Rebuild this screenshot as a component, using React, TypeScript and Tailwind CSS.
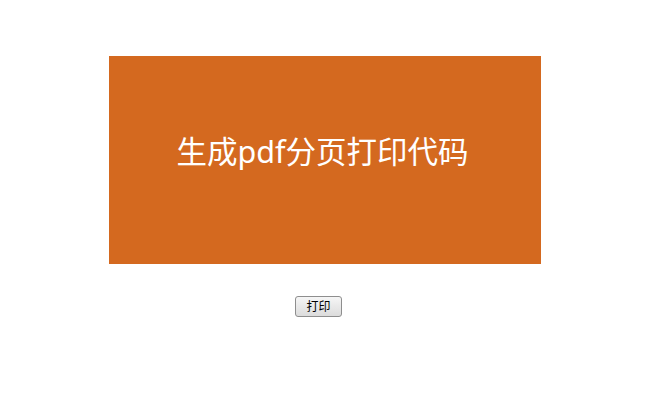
import React from 'react';

const App = () => {
  return (
    <div className="w-[650px] h-[400px] bg-white font-['Noto_Sans','Noto_Sans_CJK_SC',sans-serif]">
      {/* Banner */}
      <div className="pt-[56px] pl-[109px]">
        <div className="w-[432px] h-[208px] bg-[#d4691f] flex items-center justify-center pb-[18px] pr-[5px]">
          <span className="text-white text-[30.5px] leading-none">生成pdf分页打印代码</span>
        </div>
      </div>

      {/* Print button */}
      <div className="pt-[32px] pl-[295px]">
        <button className="w-[47px] h-[21px] flex items-center justify-center rounded-[3px] border border-[#8e8e8e] bg-gradient-to-b from-[#f6f6f6] to-[#dcdcdc] text-[12px] leading-none text-black">
          打印
        </button>
      </div>
    </div>
  );
};

export default App;
